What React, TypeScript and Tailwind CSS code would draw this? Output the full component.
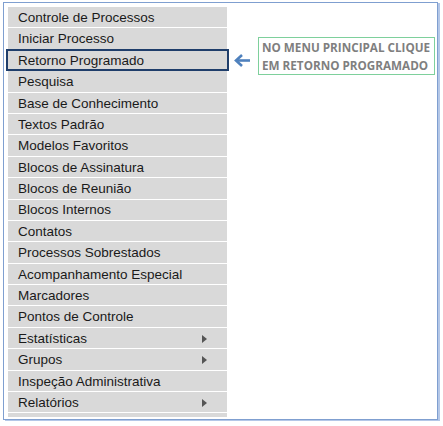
const items: { label: string; sub?: boolean; active?: boolean }[] = [
  { label: "Controle de Processos" },
  { label: "Iniciar Processo" },
  { label: "Retorno Programado", active: true },
  { label: "Pesquisa" },
  { label: "Base de Conhecimento" },
  { label: "Textos Padrão" },
  { label: "Modelos Favoritos" },
  { label: "Blocos de Assinatura" },
  { label: "Blocos de Reunião" },
  { label: "Blocos Internos" },
  { label: "Contatos" },
  { label: "Processos Sobrestados" },
  { label: "Acompanhamento Especial" },
  { label: "Marcadores" },
  { label: "Pontos de Controle" },
  { label: "Estatísticas", sub: true },
  { label: "Grupos", sub: true },
  { label: "Inspeção Administrativa" },
  { label: "Relatórios", sub: true },
];

export default function App() {
  return (
    <div className="w-[443px] h-[426px] bg-white pt-[2px] pl-[3px]">
      <div className="w-[435px] h-[418px] border border-[#7f9fd0] shadow-[2px_1px_0_#b4c7e7] flex">
        {/* menu */}
        <div className="ml-[4px] mt-[4px] w-[219px] h-[410px] bg-[#d9d9d9] font-['Liberation_Sans',Arial,sans-serif] text-[13.5px] text-[#1a1a1a]">
          {items.map((it) => (
            <div
              key={it.label}
              className="relative h-[21.4px] border-b border-white flex items-center pl-[10px] pr-[20px] pt-[1px] leading-none"
            >
              <span className="flex-1">{it.label}</span>
              {it.sub && (
                <span className="w-0 h-0 border-y-[4px] border-y-transparent border-l-[5px] border-l-[#555]" />
              )}
              {it.active && (
                <div className="absolute -left-[2px] -right-[2px] -top-[1px] bottom-[-1px] border-2 border-[#1f3e6b]" />
              )}
            </div>
          ))}
        </div>
        {/* callout */}
        <div className="flex items-start mt-[34px]">
          <svg width="31" height="38" viewBox="0 0 31 38" className="shrink-0">
            <path d="M23 23.5 H9.5" stroke="#4f81bd" strokeWidth="2.6" />
            <path d="M15 18 L9 23.5 L15 29" stroke="#4f81bd" strokeWidth="2.6" fill="none" />
          </svg>
          <div className="w-[177px] h-[38px] border border-[#7ed09c] flex flex-col justify-center pl-[3px] font-['Open_Sans',sans-serif] font-bold text-[11.7px] leading-[18px] text-[#7f7f7f] whitespace-nowrap">
            <div>NO MENU PRINCIPAL CLIQUE</div>
            <div>EM RETORNO PROGRAMADO</div>
          </div>
        </div>
      </div>
    </div>
  );
}
